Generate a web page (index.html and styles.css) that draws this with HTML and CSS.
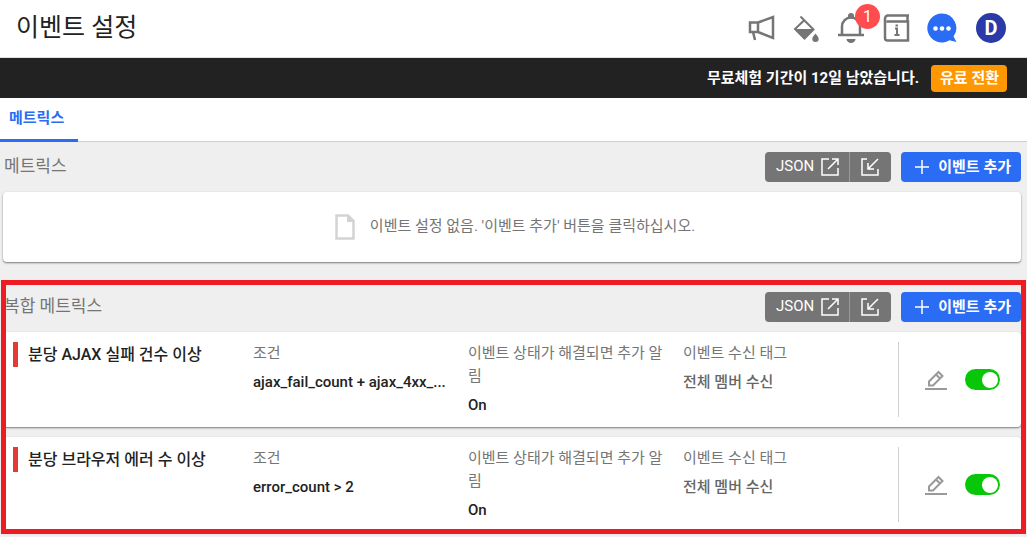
FILE: index.html
```html
<!DOCTYPE html>
<html lang="ko">
<head>
  <meta charset="UTF-8" />
  <meta name="viewport" content="width=device-width, initial-scale=1" />
  <title>이벤트 설정</title>
  <link rel="stylesheet" href="styles.css">
</head>
<body>
  <svg class="sprite" aria-hidden="true">
    <symbol id="icon-export" viewBox="0 0 18 18">
      <path d="M8 1H1v16h16v-7M11 1h6v6M17 1L7 11" />
    </symbol>
    <symbol id="icon-import" viewBox="0 0 18 18">
      <path d="M6 1H1v16h16v-6M7 5v6h6M7 11L17 1" />
    </symbol>
    <symbol id="icon-plus" viewBox="0 0 14 14">
      <path d="M7 0v14M0 7h14" />
    </symbol>
    <symbol id="icon-edit" viewBox="0 0 22 20">
      <path d="M4 11.5L13.500 2l4 4L8 15.500H4zM11 4.500l4 4" />
      <path d="M0 19h22" />
    </symbol>
  </svg>

  <header class="topbar">
    <h1>이벤트 설정</h1>
    <nav class="tools">
      <button type="button" class="tool" aria-label="공지">
        <svg width="28" height="28" viewBox="0 0 28 28" fill="none" stroke="#757575" stroke-width="2.500">
          <path d="M3 8.500H11v9.500H3zM11 8.500L26 3v21L11 18M6 18l2 8" />
        </svg>
      </button>
      <button type="button" class="tool" aria-label="테마">
        <svg width="28" height="28" viewBox="0 0 28 28">
          <path d="M8.500 2.500L21.500 15.500 12.500 24.500 3 15 12.500 6" fill="none" stroke="#757575" stroke-width="2" />
          <path d="M3 15h19l-9.500 10z" fill="#757575" />
          <path d="M23.500 19.500c2 2.500 3.200 3.800 3.200 5.300a3.200 3.200 0 0 1-6.400 0c0-1.500 1.200-2.800 3.200-5.300z" fill="#757575" />
        </svg>
      </button>
      <button type="button" class="tool" aria-label="알림">
        <svg width="28" height="30" viewBox="0 0 28 30">
          <path d="M1 22h26M5 22V13.500a9 9 0 0 1 18 0V22" fill="none" stroke="#757575" stroke-width="2.500" />
          <path d="M11 5V3a3 3 0 0 1 6 0v2zM9.500 26h9a4.500 4 0 0 1-9 0z" fill="#757575" />
        </svg>
        <span class="badge">1</span>
      </button>
      <button type="button" class="tool" aria-label="가이드">
        <svg width="28" height="28" viewBox="0 0 28 28" fill="none" stroke="#757575" stroke-width="2.500">
          <path d="M27 1.500H6a3 3 0 0 0-3 3V24a2.500 2.500 0 0 0 2.500 2.500H26V7.500H4.500M25.500 2v5" />
          <path d="M13 14.500h2V21M12.500 21h5" stroke-width="2" />
          <path d="M13.500 11.500h2.500" stroke-width="2" />
        </svg>
      </button>
      <button type="button" class="tool" aria-label="채팅">
        <svg width="30" height="30" viewBox="0 0 30 30">
          <path d="M15 .5a14.500 14.500 0 1 0 7.500 26.800L29.500 29l-3-5.500A14.500 14.500 0 0 0 15 .5z" fill="#2a6df4" />
          <g fill="#fff"><circle cx="8.500" cy="15.500" r="2.300" /><circle cx="15" cy="15.500" r="2.300" /><circle cx="21.500" cy="15.500" r="2.300" /></g>
        </svg>
      </button>
      <button type="button" class="avatar">D</button>
    </nav>
  </header>

  <div class="trial">
    <span>무료체험 기간이 12일 남았습니다.</span>
    <button type="button" class="upgrade">유료 전환</button>
  </div>

  <nav class="tabs">
    <a href="#metrics" class="active">메트릭스</a>
  </nav>

  <main>
    <section id="metrics" class="group">
      <div class="group-head">
        <h2>메트릭스</h2>
        <div class="json">
          <button type="button"><span>JSON</span><svg class="icon"><use href="#icon-export" /></svg></button>
          <button type="button" aria-label="JSON 가져오기"><svg class="icon"><use href="#icon-import" /></svg></button>
        </div>
        <button type="button" class="add"><svg class="plus"><use href="#icon-plus" /></svg><span>이벤트 추가</span></button>
      </div>
      <div class="card empty">
        <svg width="20" height="26" viewBox="0 0 20 26">
          <path d="M1.500 1.500H13L18.500 7v17.500h-17z" fill="none" stroke="#d3d3d3" stroke-width="2.500" />
          <path d="M12 1h1.500L19 6.500V8h-7z" fill="#d3d3d3" />
        </svg>
        <p>이벤트 설정 없음. '이벤트 추가' 버튼을 클릭하십시오.</p>
      </div>
    </section>

    <section class="group marked">
      <div class="group-head">
        <h2>복합 메트릭스</h2>
        <div class="json">
          <button type="button"><span>JSON</span><svg class="icon"><use href="#icon-export" /></svg></button>
          <button type="button" aria-label="JSON 가져오기"><svg class="icon"><use href="#icon-import" /></svg></button>
        </div>
        <button type="button" class="add"><svg class="plus"><use href="#icon-plus" /></svg><span>이벤트 추가</span></button>
      </div>

      <article class="card event">
        <h3>분당 AJAX 실패 건수 이상</h3>
        <div class="field">
          <p class="label">조건</p>
          <p class="value">ajax_fail_count + ajax_4xx_...</p>
        </div>
        <div class="field">
          <p class="label">이벤트 상태가 해결되면 추가 알림</p>
          <p class="value">On</p>
        </div>
        <div class="field">
          <p class="label">이벤트 수신 태그</p>
          <p class="value muted">전체 멤버 수신</p>
        </div>
        <div class="actions">
          <button type="button" class="edit" aria-label="수정"><svg><use href="#icon-edit" /></svg></button>
          <input type="checkbox" class="switch" aria-label="분당 AJAX 실패 건수 이상" checked />
        </div>
      </article>

      <article class="card event">
        <h3>분당 브라우저 에러 수 이상</h3>
        <div class="field">
          <p class="label">조건</p>
          <p class="value">error_count &gt; 2</p>
        </div>
        <div class="field">
          <p class="label">이벤트 상태가 해결되면 추가 알림</p>
          <p class="value">On</p>
        </div>
        <div class="field">
          <p class="label">이벤트 수신 태그</p>
          <p class="value muted">전체 멤버 수신</p>
        </div>
        <div class="actions">
          <button type="button" class="edit" aria-label="수정"><svg><use href="#icon-edit" /></svg></button>
          <input type="checkbox" class="switch" aria-label="분당 브라우저 에러 수 이상" checked />
        </div>
      </article>
    </section>
  </main>
</body>
</html>
```
FILE: styles.css
```css
* {
  box-sizing: border-box;
}

body {
  margin: 0;
  background: #fff;
  color: #222;
  font-family: Roboto, "Noto Sans CJK KR", sans-serif;
  font-size: 15px;
}

h1, h2, h3, p {
  margin: 0;
}

button {
  font: inherit;
  border: none;
  padding: 0;
  background: none;
  cursor: pointer;
}

.sprite {
  display: none;
}

.topbar {
  display: flex;
  align-items: center;
  justify-content: space-between;
  height: 58px;
  padding: 0 21px 2px 16px;
  border-bottom: 1px solid #e0e0e0;
}

.topbar h1 {
  font-size: 25px;
  font-weight: 400;
  line-height: 32px;
}

.tools {
  display: flex;
  align-items: center;
  gap: 17px;
}

.tool {
  position: relative;
  display: flex;
}

.badge {
  position: absolute;
  top: -9px;
  right: -15px;
  width: 25px;
  height: 25px;
  border-radius: 50%;
  background: #ff4d4f;
  color: #fff;
  font-size: 16px;
  line-height: 25px;
  text-align: center;
}

.avatar {
  width: 30px;
  height: 30px;
  margin-left: 2px;
  border-radius: 50%;
  background: #2a3aa8;
  color: #fff;
  font-size: 20px;
  font-weight: 700;
}

.trial {
  display: flex;
  align-items: center;
  justify-content: flex-end;
  gap: 12px;
  height: 40px;
  padding-right: 20px;
  background: #222;
  color: #fff;
  font-weight: 700;
}

.trial span {
  padding-bottom: 4px;
}

.upgrade {
  height: 27px;
  padding: 0 8px 3px 9px;
  border-radius: 4px;
  background: #ff9800;
  color: #fff;
}

.tabs {
  display: flex;
  height: 44px;
  border-bottom: 1px solid #d0d0d0;
}

.tabs a {
  height: 44px;
  padding: 0 14px 0 9px;
  line-height: 41px;
  text-decoration: none;
}

.tabs .active {
  border-bottom: 3px solid #2a6df4;
  color: #2a6df4;
  font-weight: 700;
}

main {
  padding-bottom: 5px;
  background: #efefef;
}

.group {
  display: flex;
  flex-direction: column;
  gap: 10px;
  padding: 10px 6px 0 3px;
}

.group-head {
  display: flex;
  align-items: center;
  height: 30px;
}

.group-head h2 {
  margin-right: auto;
  padding: 0 0 6px 1px;
  color: #757575;
  font-size: 17px;
  font-weight: 400;
}

.json {
  display: flex;
  height: 30px;
  margin-right: 10px;
  border-radius: 4px;
  background: #757575;
}

.json button {
  display: flex;
  align-items: center;
  gap: 7px;
  padding: 0 10px 0 11px;
  color: #fff;
  line-height: 18px;
}

.json span {
  padding-bottom: 2px;
}

.json button + button {
  padding: 0 12px 0 11px;
  border-left: 1px solid #999;
}

.icon {
  width: 18px;
  height: 18px;
  fill: none;
  stroke: #fff;
  stroke-width: 1.5;
}

.add {
  display: flex;
  align-items: center;
  gap: 9px;
  height: 30px;
  padding: 0 10px 0 14px;
  border-radius: 4px;
  background: #2a6df4;
  color: #fff;
  font-weight: 700;
}

.add span {
  padding-bottom: 4px;
}

.plus {
  width: 14px;
  height: 14px;
  stroke: #fff;
  stroke-width: 1.5;
}

.card {
  border-radius: 4px;
  background: #fff;
  box-shadow: 0 1px 2px rgba(0, 0, 0, 0.5);
}

.empty {
  display: flex;
  align-items: center;
  justify-content: center;
  gap: 15px;
  height: 70px;
  padding-left: 6px;
  color: #757575;
}

.empty p {
  padding-bottom: 6px;
}

/* red frame around the composite metrics */
.marked {
  position: relative;
  margin-top: 20px;
}

.marked::after {
  content: "";
  position: absolute;
  inset: -2px 1px -2px 1px;
  border: 5px solid #ed1c24;
  pointer-events: none;
}

.event {
  display: grid;
  grid-template-columns: 240px repeat(3, 1fr) 113px;
  padding: 10px;
  line-height: 23px;
}

.event h3 {
  align-self: start;
  padding-left: 10px;
  border-left: 5px solid #e53935;
  font-size: 16px;
  font-weight: 500;
  line-height: 25px;
}

.field {
  min-width: 0;
  padding-right: 20px;
}

.label {
  color: #757575;
}

.value {
  margin-top: 6px;
  overflow: hidden;
  font-weight: 500;
  text-overflow: ellipsis;
  white-space: nowrap;
}

.muted {
  color: #666;
}

.actions {
  display: flex;
  align-items: center;
  justify-content: flex-end;
  gap: 18px;
  padding-right: 11px;
  border-left: 1px solid #d0d0d0;
}

.edit {
  display: flex;
}

.edit svg {
  width: 22px;
  height: 20px;
  fill: none;
  stroke: #999;
  stroke-width: 2;
}

.switch {
  appearance: none;
  display: flex;
  align-items: center;
  width: 35px;
  height: 21px;
  margin: 0;
  padding: 0 2px;
  border-radius: 11px;
  background: #bbb;
  cursor: pointer;
}

.switch::before {
  content: "";
  width: 16px;
  height: 16px;
  border-radius: 50%;
  background: #fff;
}

.switch:checked {
  justify-content: flex-end;
  background: #08c708;
}
```
